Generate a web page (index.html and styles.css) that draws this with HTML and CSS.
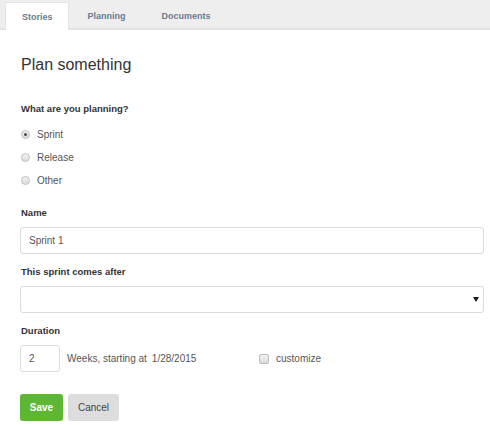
FILE: index.html
```html
<!DOCTYPE html>
<html>
<head>
<meta charset="utf-8">
<link rel="stylesheet" href="styles.css">
</head>
<body>
<nav class="tabs">
  <a class="tab active">Stories</a>
  <a class="tab">Planning</a>
  <a class="tab">Documents</a>
</nav>
<main class="content">
  <h1 class="title">Plan something</h1>
  <div class="group">
    <div class="label">What are you planning?</div>
    <label class="radio-row"><input type="radio" name="kind" checked><span>Sprint</span></label>
    <label class="radio-row"><input type="radio" name="kind"><span>Release</span></label>
    <label class="radio-row"><input type="radio" name="kind"><span>Other</span></label>
  </div>
  <div class="field field-first">
    <div class="label">Name</div>
    <input class="text-input" type="text" value="Sprint 1">
  </div>
  <div class="field">
    <div class="label">This sprint comes after</div>
    <div class="select-wrap">
      <select class="select"><option></option></select>
      <svg class="caret" width="6" height="5" viewBox="0 0 6 5"><path d="M0 0H6L3 5Z" fill="#1a1a1a"/></svg>
    </div>
  </div>
  <div class="field">
    <div class="label">Duration</div>
    <div class="duration">
      <input class="text-input small" type="text" value="2">
      <span class="duration-info"><span>Weeks, starting at</span><span class="date">1/28/2015</span></span>
      <label class="check"><input type="checkbox"><span>customize</span></label>
    </div>
  </div>
  <div class="actions">
    <button class="btn btn-save">Save</button>
    <button class="btn btn-cancel">Cancel</button>
  </div>
</main>
</body>
</html>
```
FILE: styles.css
```css
* { box-sizing: border-box; }
html, body { margin: 0; padding: 0; background: #fff; }
body { font-family: "Liberation Sans", Arial, sans-serif; color: #555; font-size: 10px; }

.tabs {
  display: flex;
  align-items: flex-end;
  height: 30px;
  padding-left: 5px;
  background: #eeeeee;
  border-bottom: 2px solid #e3e3e3;
}
.tab {
  display: flex;
  align-items: center;
  height: 28px;
  padding: 0 17px 0 19px;
  font-size: 9px;
  font-weight: bold;
  color: #6b7b92;
  margin-bottom: -2px;
}
.tab.active {
  height: 28px;
  background: #fff;
  border: 1px solid #e4e4e4;
  border-bottom: none;
  border-radius: 2px 2px 0 0;
  padding: 0 15px 0 16px;
}

.content { padding: 0 6px 0 20px; }
.title {
  margin: 25px 0 0 1px;
  font-size: 16px;
  line-height: 20px;
  font-weight: normal;
  color: #333;
}
.label {
  font-size: 9.5px;
  font-weight: bold;
  line-height: 12px;
  color: #333;
  margin: 0 0 8px 1px;
}
.group { margin-top: 28px; }
.radio-row {
  display: flex;
  align-items: center;
  height: 23px;
  padding-left: 1px;
}
.radio-row input {
  appearance: none;
  -webkit-appearance: none;
  margin: 0 7px 0 0;
  width: 9px;
  height: 9px;
  border-radius: 50%;
  border: 1px solid #bdbdbd;
  background: linear-gradient(#f2f2f2, #dcdcdc);
  position: relative;
}
.radio-row input:checked::after {
  content: "";
  position: absolute;
  left: 2px; top: 2px;
  width: 3px; height: 3px;
  border-radius: 50%;
  background: #4a4a4a;
}
.radio-row span { font-size: 10px; color: #555; }

.field { margin-bottom: 12px; }
.field-first { margin-top: 15px; }
.text-input {
  display: block;
  width: 100%;
  height: 27px;
  border: 1px solid #dadada;
  border-radius: 3px;
  padding: 0 8px;
  font-family: inherit;
  font-size: 10px;
  color: #555;
  background: #fff;
  outline: none;
}
.select-wrap { position: relative; }
.select {
  display: block;
  width: 100%;
  height: 27px;
  appearance: none;
  -webkit-appearance: none;
  border: 1px solid #dadada;
  border-radius: 3px;
  background: #fff;
  font-family: inherit;
  font-size: 10px;
  outline: none;
}
.caret { position: absolute; right: 5px; top: 11px; }

.duration { display: flex; align-items: center; height: 27px; }
.text-input.small { width: 40px; flex: 0 0 40px; }
.duration-info { flex: 0 0 199px; padding-left: 7px; display: flex; font-size: 10px; color: #555; }
.date { margin-left: 5px; }
.check { display: flex; align-items: center; }
.check input {
  appearance: none;
  -webkit-appearance: none;
  margin: 0 7px 0 0;
  width: 10px;
  height: 10px;
  border: 1px solid #bdbdbd;
  border-radius: 2px;
  background: linear-gradient(#f2f2f2, #dcdcdc);
}
.check span { font-size: 10px; color: #555; }

.actions { display: flex; gap: 5px; margin-top: 22px; }
.btn {
  height: 27px;
  border: none;
  border-radius: 3px;
  font-family: inherit;
  font-size: 10px;
  padding: 0;
}
.btn-save { width: 43px; background: #5db732; color: #fff; font-weight: bold; }
.btn-cancel { width: 51px; background: #dddddd; color: #444; }
```
